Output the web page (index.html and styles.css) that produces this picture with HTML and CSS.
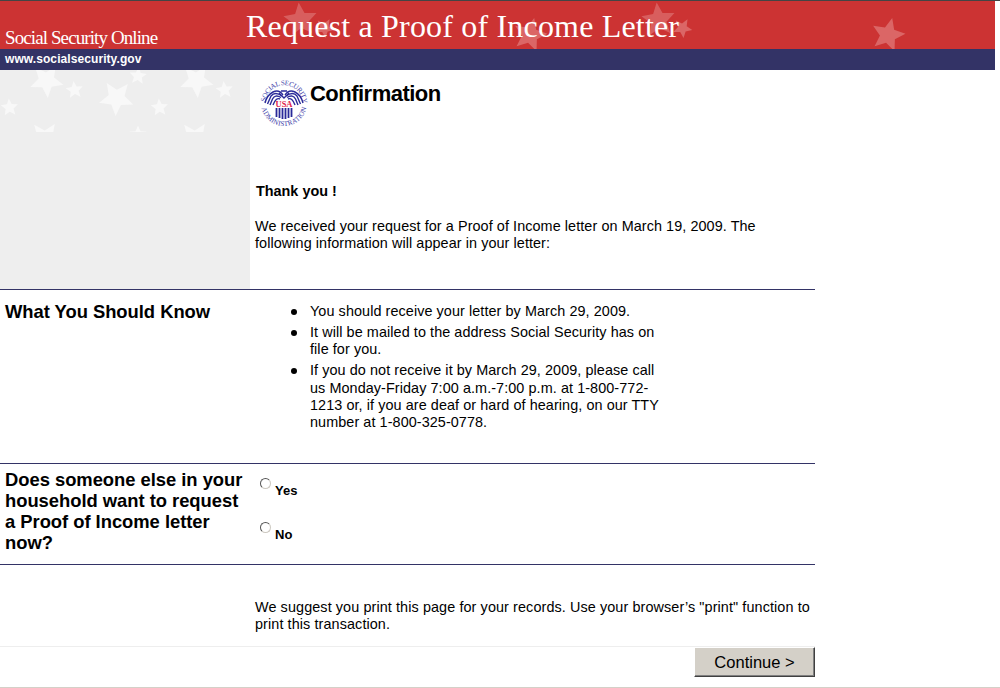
FILE: index.html
```html
<!DOCTYPE html>
<html lang="en">
<head>
  <meta charset="UTF-8">
  <title>Request a Proof of Income Letter</title>
  <link rel="stylesheet" href="styles.css">
</head>
<body>
  <svg width="0" height="0" class="defs">
    <symbol id="star" viewBox="-1 -1 2 2" overflow="visible">
      <polygon points="0,-1 .27,-.37 .951,-.309 .44,.14 .588,.809 0,.46 -.588,.809 -.44,.14 -.951,-.309 -.27,-.37"/>
    </symbol>
  </svg>

  <div class="header">
    <svg class="header-stars" viewBox="0 0 995 48">
      <g id="pair">
        <use href="#star" x="-17.5" y="-17.5" width="35" height="35" transform="translate(300.5 19) rotate(-6)" opacity=".85"/>
        <use href="#star" x="-10" y="-10" width="20" height="20" transform="translate(324.5 27) rotate(30)"/>
        <use href="#star" x="-17.5" y="-17.5" width="35" height="35" transform="translate(530 34) rotate(14)"/>
      </g>
      <use href="#pair" x="358"/>
    </svg>
    <div class="site-name"><span>Social Security Online</span></div>
    <div class="page-name"><span>Request a Proof of Income Letter</span></div>
  </div>
  <div class="site-url"><span>www.socialsecurity.gov</span></div>

  <div class="row intro">
    <div class="side">
      <svg width="250" height="62" viewBox="0 70 250 62">
        <g id="tile">
          <use href="#star" x="-17.5" y="-17.5" width="35" height="35" transform="translate(46.5 80.5) rotate(176)"/>
          <use href="#star" x="-9" y="-9" width="18" height="18" transform="translate(74.5 90) rotate(-6)"/>
          <use href="#star" x="-9" y="-9" width="18" height="18" transform="translate(9.5 107.5) rotate(-4)"/>
          <use href="#star" x="-18" y="-18" width="36" height="36" transform="translate(116.5 98) rotate(183)"/>
          <use href="#star" x="-9" y="-9" width="18" height="18" transform="translate(138 76) rotate(5)"/>
          <use href="#star" x="-17.5" y="-17.5" width="35" height="35" transform="translate(45 138.5) rotate(178)"/>
          <use href="#star" x="-9" y="-9" width="18" height="18" transform="translate(138 134.5)"/>
        </g>
        <use href="#tile" x="150"/>
      </svg>
    </div>
    <div class="main">
      <div class="title">
        <svg class="seal" width="48" height="48" viewBox="-24 -24 48 48">
          <path id="arcTop" fill="none" d="M-18.6 -1A18.7 18.7 0 0 1 18.6 -1"/>
          <path id="arcBottom" fill="none" d="M-22.8 3A23 23 0 0 0 22.8 3"/>
          <text class="seal-ring"><textPath href="#arcTop" startOffset="0" textLength="56">SOCIAL SECURITY</textPath></text>
          <text class="seal-ring"><textPath href="#arcBottom" startOffset="2" textLength="62">ADMINISTRATION</textPath></text>
          <g class="seal-wing">
            <path d="M-1-8Q-5-14-11-11Q-17-8-19 0M-2-7Q-9-12-13-7L-16.5 1M-3-5.5Q-9-9-11.5-4L-14 2M-4-4Q-8-6-11 2"/>
            <path d="M1-8Q5-14 11-11Q17-8 19 0M2-7Q9-12 13-7L16.5 1M3-5.5Q9-9 11.5-4L14 2M4-4Q8-6 11 2"/>
            <path d="M-5-10L0-5L5-10M-3-12H3"/>
          </g>
          <text class="seal-usa" x="-8.5" y="4" textLength="17" lengthAdjust="spacingAndGlyphs">USA</text>
          <path class="seal-stripes" d="M-7.5 5V14M-4.5 5V15M-1.5 5V16M1.5 5V16M4.5 5V15M7.5 5V14"/>
        </svg>
        <h1>Confirmation</h1>
      </div>
      <h3>Thank you !</h3>
      <p>We received your request for a Proof of Income letter on March 19, 2009. The<br>following information will appear in your letter:</p>
    </div>
  </div>

  <div class="row know">
    <div class="side"><h2>What You Should Know</h2></div>
    <ul>
      <li><span>You should receive your letter by March 29, 2009.</span></li>
      <li><span>It will be mailed to the address Social Security has on<br>file for you.</span></li>
      <li><span>If you do not receive it by March 29, 2009, please call<br>us Monday-Friday 7:00 a.m.-7:00 p.m. at 1-800-772-<br>1213 or, if you are deaf or hard of hearing, on our TTY<br>number at 1-800-325-0778.</span></li>
    </ul>
  </div>

  <div class="row question">
    <div class="side"><h2>Does someone else in your<br>household want to request<br>a Proof of Income letter<br>now?</h2></div>
    <div class="options">
      <label><input type="radio" name="another"><span>Yes</span></label>
      <label><input type="radio" name="another"><span>No</span></label>
    </div>
  </div>

  <div class="print">
    <p>We suggest you print this page for your records. Use your browser’s "print" function to<br>print this transaction.</p>
  </div>
  <div class="actions"><button>Continue &gt;</button></div>
</body>
</html>
```

FILE: styles.css
```css
body {
  margin: 0;
  height: 686px;
  border-top: 1px solid #444;
  border-bottom: 1px solid #d4d0c8;
  background: #fff;
  color: #000;
  font-family: "Liberation Sans", Arial, sans-serif;
  font-size: 14.4px;
  line-height: 17px;
  letter-spacing: 0.08px;
  white-space: nowrap;
  overflow: hidden;
}

h1, h2, h3, p, ul {
  margin: 0;
  padding: 0;
}

.defs {
  position: absolute;
}

.header {
  position: relative;
  display: flex;
  width: 995px;
  height: 48px;
  background: #cc3333;
  color: #fff;
  font-family: "Liberation Serif", Georgia, serif;
}

.header-stars {
  position: absolute;
  left: 0;
  top: 0;
  width: 995px;
  height: 48px;
  fill: #db6666;
}

.site-name {
  position: relative;
  width: 241px;
  padding: 26px 0 0 5px;
  font-size: 19px;
  line-height: 22px;
  letter-spacing: -0.9px;
}

.page-name {
  position: relative;
  padding-top: 7px;
  font-size: 32px;
  line-height: 36px;
  letter-spacing: 0.18px;
}

.site-url {
  box-sizing: border-box;
  width: 995px;
  height: 21px;
  padding-left: 5px;
  background: #333366;
  color: #fff;
  font-size: 12px;
  font-weight: bold;
  line-height: 21px;
}

.row {
  display: flex;
  box-sizing: border-box;
  width: 815px;
  border-bottom: 1px solid #333366;
}

.side {
  width: 250px;
  flex: none;
}

.intro {
  height: 220px;
}

.intro .side {
  background: #eee;
  fill: #f8f8f8;
}

.intro .side svg {
  display: block;
}

.main {
  padding: 9px 0 0 5px;
}

.title {
  display: flex;
  height: 104px;
  padding-left: 5px;
}

h1 {
  padding: 2px 0 0 2px;
  font-size: 22px;
  line-height: 25px;
  letter-spacing: -0.52px;
}

.seal {
  letter-spacing: 0;
}

.seal-ring {
  font: 7px "Liberation Serif", serif;
  fill: #3c3ca8;
}

.seal-wing path,
.seal-stripes {
  fill: none;
  stroke: #2a2a99;
  stroke-width: 1.4;
}

.seal-stripes {
  stroke-width: 1.8;
}

.seal-usa {
  font: bold 8px "Liberation Serif", serif;
  fill: #e0204c;
}

h3 {
  padding-left: 1px;
  font-size: 14.4px;
  line-height: 17px;
  letter-spacing: 0;
}

.main p {
  padding-top: 18px;
}

h2 {
  padding-left: 5px;
  font-size: 18.4px;
  line-height: 21px;
  letter-spacing: -0.03px;
}

.know {
  height: 174px;
}

.know h2 {
  padding-top: 11px;
}

ul {
  padding: 13px 0 0 41px;
  list-style: none;
}

li {
  display: flex;
  margin-bottom: 3.5px;
  line-height: 17.4px;
}

li::before {
  content: "";
  width: 6px;
  height: 6px;
  margin: 6px 13px 0 0;
  border-radius: 50%;
  background: #000;
}

.question {
  height: 101px;
}

.question h2 {
  padding-top: 5px;
}

.options {
  padding: 14px 0 0 10px;
}

label {
  display: flex;
  height: 44px;
  font-size: 13px;
  font-weight: bold;
  letter-spacing: 0;
}

label span {
  padding: 4px 0 0 4px;
}

input[type="radio"] {
  appearance: none;
  width: 11px;
  height: 11px;
  margin: 0;
  border: 1px solid;
  border-color: #555 #ccc8c0 #ccc8c0 #555;
  border-radius: 50%;
  background: #fff;
}

.print {
  height: 47px;
  padding: 34px 0 0 255px;
  letter-spacing: 0.1px;
}

.actions {
  display: flex;
  justify-content: flex-end;
  width: 815px;
  border-top: 1px solid #eee;
}

button {
  box-sizing: border-box;
  width: 121px;
  height: 30px;
  padding: 0;
  border: 1px solid;
  border-color: #fff #404040 #404040 #fff;
  box-shadow: inset -1px -1px 0 #808080;
  background: #d4d0c8;
  color: #000;
  font: 16.5px "Liberation Sans", Arial, sans-serif;
}
```
